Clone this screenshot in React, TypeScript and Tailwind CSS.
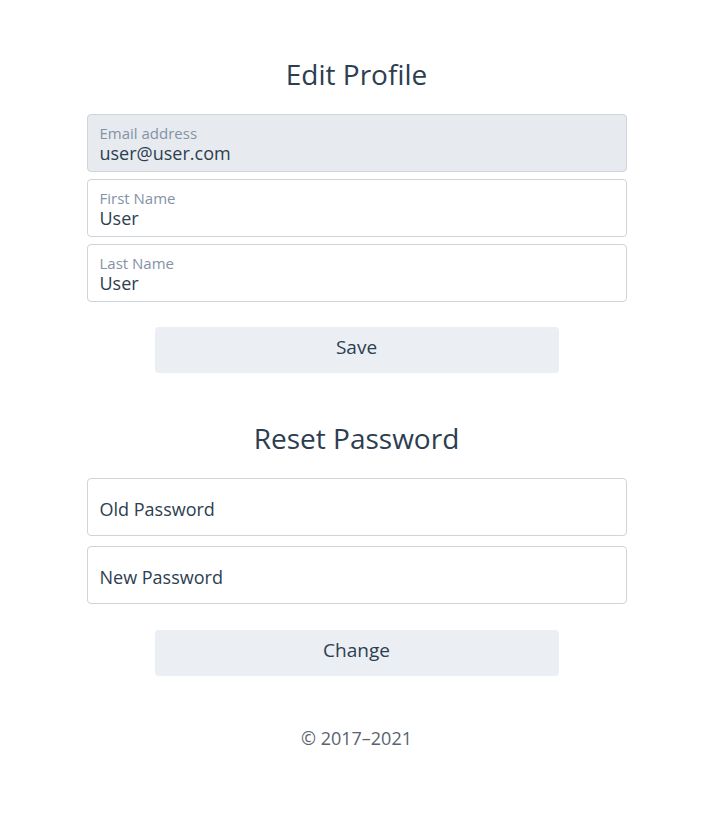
import React from "react";

const font = { fontFamily: '"Open Sans", "Noto Sans", sans-serif' };

function Field({
  label,
  value,
  disabled,
}: {
  label: string;
  value: string;
  disabled?: boolean;
}) {
  return (
    <div
      className={`h-[58px] rounded border border-[#ced4da] px-3 pt-[9px] ${
        disabled ? "bg-[#e7ebef]" : "bg-white"
      }`}
    >
      <div className="text-[15px] leading-[18px] text-[#8492a6]">{label}</div>
      <div className="text-[18px] leading-[22px] text-[#2c3e50]">{value}</div>
    </div>
  );
}

function PasswordField({ placeholder }: { placeholder: string }) {
  return (
    <div className="flex h-[58px] items-center rounded border border-[#ced4da] bg-white px-3 pt-[5px]">
      <span className="text-[18px] text-[#2c3e50]">{placeholder}</span>
    </div>
  );
}

function Button({ children }: { children: React.ReactNode }) {
  return (
    <button className="mx-auto block h-[46px] w-[404px] rounded bg-[#ebeef3] pb-[6px] text-[19px] text-[#2c3e50]">
      {children}
    </button>
  );
}

export default function App() {
  return (
    <div className="min-h-screen bg-white pl-[5px]" style={font}>
      <div className="mx-auto w-[540px] pt-[55px]">
        {/* Edit profile */}
        <h2 className="text-center text-[28px] leading-[38px] text-[#2c3e50]">
          Edit Profile
        </h2>
        <div className="mt-[21px] flex flex-col gap-[7px]">
          <Field label="Email address" value="user@user.com" disabled />
          <Field label="First Name" value="User" />
          <Field label="Last Name" value="User" />
        </div>
        <div className="mt-[25px]">
          <Button>Save</Button>
        </div>

        {/* Reset password */}
        <h2 className="mt-[46px] text-center text-[28px] leading-[38px] text-[#2c3e50]">
          Reset Password
        </h2>
        <div className="mt-[21px] flex flex-col gap-[10px]">
          <PasswordField placeholder="Old Password" />
          <PasswordField placeholder="New Password" />
        </div>
        <div className="mt-[26px]">
          <Button>Change</Button>
        </div>

        <footer className="mt-[50px] text-center text-[18px] leading-[24px] text-[#5b6270]">
          © 2017–2021
        </footer>
      </div>
    </div>
  );
}
